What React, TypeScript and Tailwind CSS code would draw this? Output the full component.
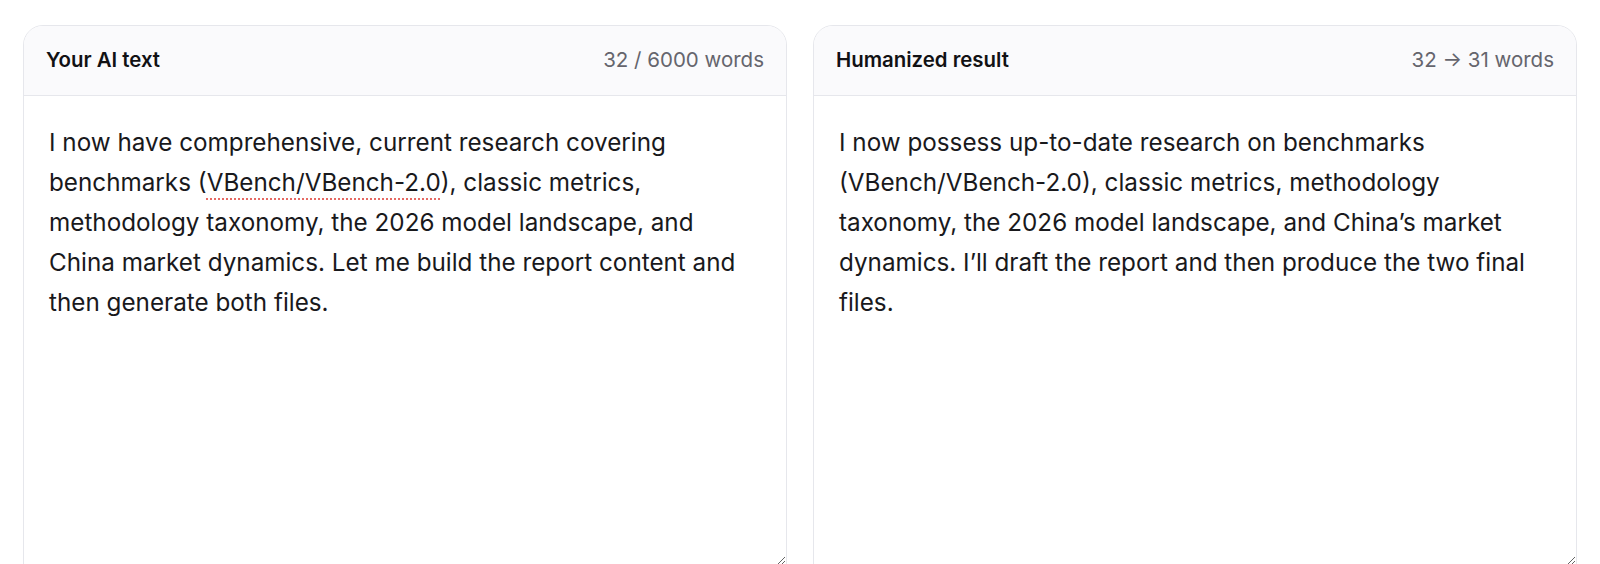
const cards = [
  {
    title: "Your AI text",
    count: "32 / 6000 words",
    body: (
      <>
        I now have comprehensive, current research covering benchmarks (
        <span className="underline decoration-dotted decoration-[#e66a64] decoration-[2px] underline-offset-[7px]">
          VBench/VBench-2.0
        </span>
        ), classic metrics, methodology taxonomy, the 2026 model landscape, and
        China market dynamics. Let me build the report content and then
        generate both files.
      </>
    ),
  },
  {
    title: "Humanized result",
    count: "32 → 31 words",
    body: (
      <>
        I now possess up-to-date research on benchmarks (VBench/VBench-2.0),
        classic metrics, methodology taxonomy, the 2026 model landscape, and
        China’s market dynamics. I’ll draft the report and then produce the two
        final files.
      </>
    ),
  },
];

export default function App() {
  return (
    <div
      className="h-screen overflow-hidden bg-white px-[23px] pt-[25px]"
      style={{ fontFamily: "Inter, 'Noto Sans', sans-serif" }}
    >
      <div className="grid grid-cols-2 gap-[26px]">
        {cards.map((card) => (
          <div
            key={card.title}
            className="flex flex-col rounded-[20px] border border-[#e6e7ec] bg-white overflow-hidden"
          >
            {/* Header */}
            <div className="flex h-[70px] items-center justify-between border-b border-[#e6e7ec] bg-[#fafafc] px-[22px]">
              <span className="text-[20.4px] font-semibold text-[#111114]">
                {card.title}
              </span>
              <span className="text-[20.5px] text-[#65656d]">{card.count}</span>
            </div>

            {/* Body */}
            <div className="h-[469px] resize-y overflow-auto px-[25px] pt-[27px] text-[24.25px] leading-[40px] text-[#19191c]">
              {card.body}
            </div>

            {/* Footer space */}
            <div className="h-12" />
          </div>
        ))}
      </div>
    </div>
  );
}
